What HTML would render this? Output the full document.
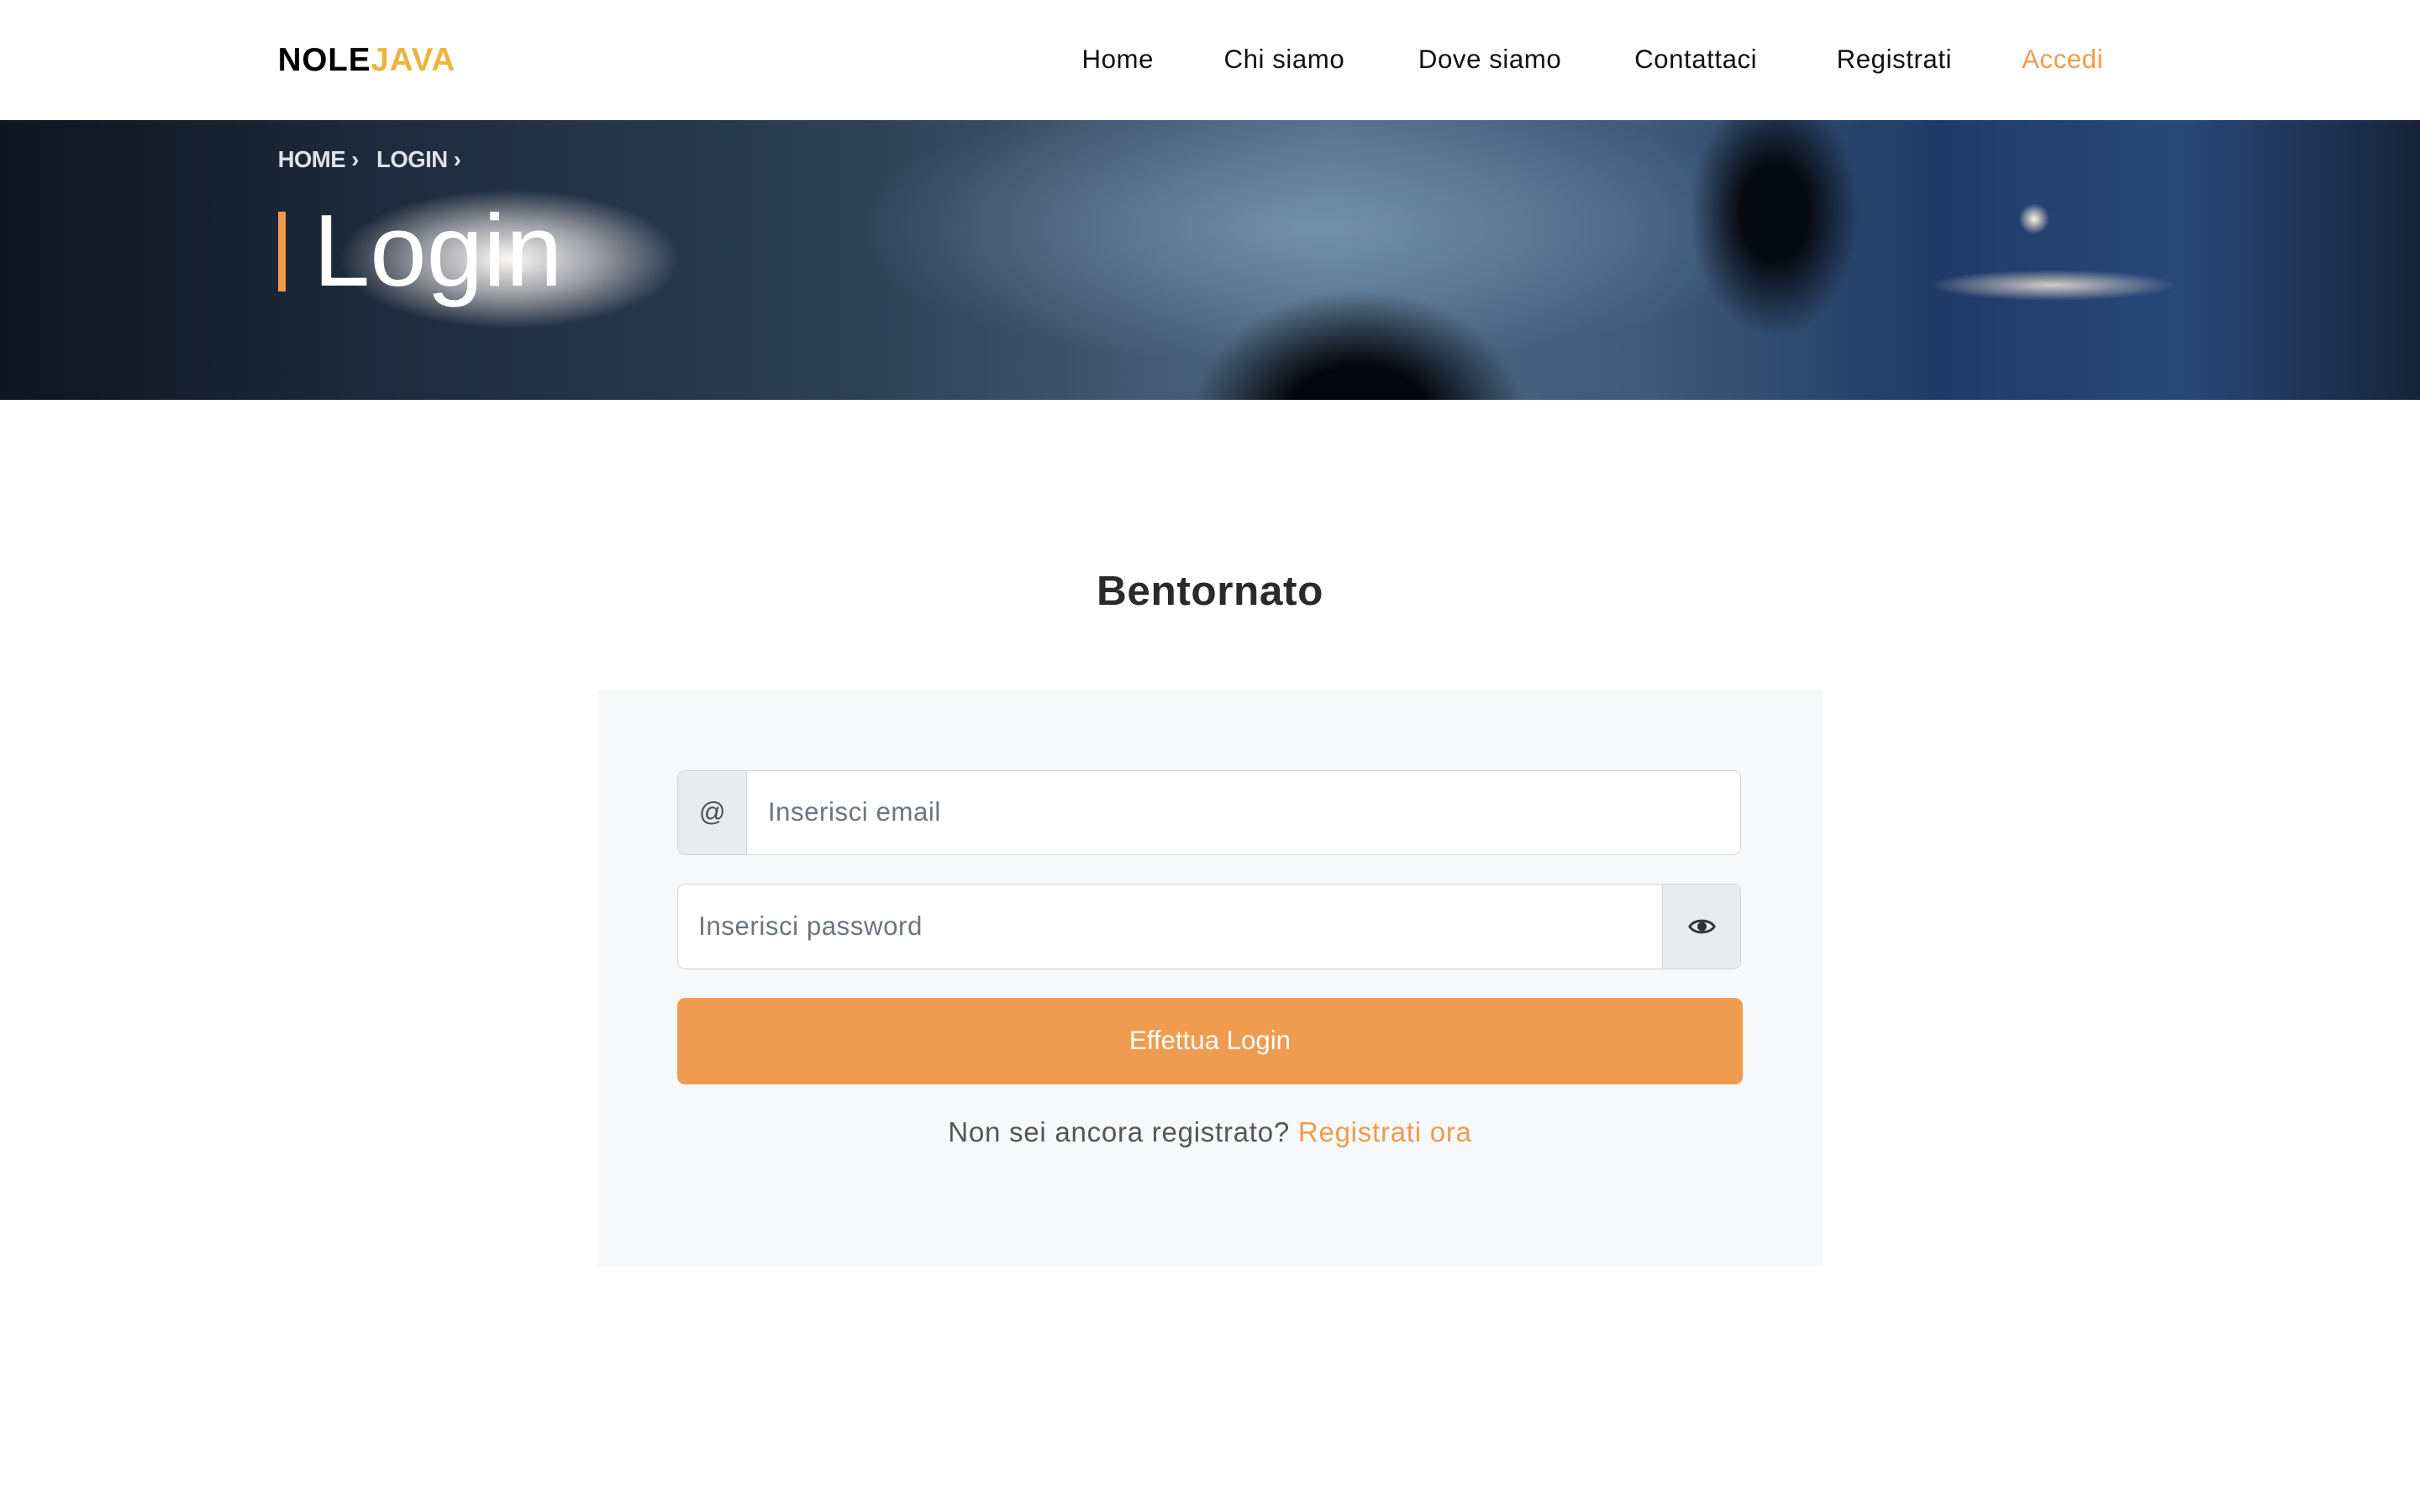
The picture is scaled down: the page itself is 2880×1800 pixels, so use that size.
<!DOCTYPE html>
<html><head><meta charset="utf-8"><style>
html{zoom:1.8367}
body{margin:0;width:1568px;height:980px;overflow:hidden;background:#fff;font-family:"Liberation Sans",sans-serif;color:#212529}
.hdr{height:78px;position:relative}
.logo{position:absolute;left:180px;top:27px;font-weight:bold;font-size:21px;letter-spacing:0.5px;color:#000}
.logo span{color:#ebb53f}
.nav a{position:absolute;top:29px;font-size:17px;color:#111;text-decoration:none;letter-spacing:.3px}
.hero{position:absolute;top:78px;left:0;width:1568px;height:181px;overflow:hidden;
background:
radial-gradient(ellipse 110px 45px at 330px 90px,rgba(255,252,248,.98),rgba(225,220,220,.65) 50%,rgba(0,0,0,0) 100%),
radial-gradient(ellipse 110px 90px at 880px 200px,#04060b 45%,rgba(0,0,0,0) 100%),
radial-gradient(ellipse 55px 80px at 1150px 60px,#060a12 40%,rgba(0,0,0,0) 100%),
radial-gradient(circle 10px at 1318px 64px,#fff5e0,rgba(255,255,255,0)),
radial-gradient(ellipse 80px 10px at 1330px 107px,rgba(255,240,220,.8),rgba(255,255,255,0)),
radial-gradient(ellipse 300px 90px at 850px 70px,rgba(140,170,195,.6),rgba(0,0,0,0)),
linear-gradient(90deg,#0d1520 0%,#1d2a3a 15%,#2c3f55 35%,#4f6a85 55%,#3f5a78 68%,#1f3a66 80%,#29487a 90%,#16243a 100%)}
.bc{position:absolute;left:180px;top:95px;font-size:15px;color:#dde2ea;font-weight:bold;letter-spacing:-.3px}
.title{position:absolute;left:203px;top:126px;font-size:66px;color:#fff;line-height:74px}
.bar{position:absolute;left:180px;top:137px;width:5px;height:52px;background:#ef9b4f}
h2{position:absolute;top:367px;width:1568px;text-align:center;margin:0;font-size:27px;font-weight:bold;color:#2a2a2a;letter-spacing:.3px}
.card{position:absolute;left:387px;top:447px;width:794px;height:374px;background:#f7f8fa}
.in{position:absolute;left:439px;width:688px;height:54px;border:1px solid #ced4da;border-radius:5px;background:#fff;overflow:hidden}
.addon{position:absolute;top:0;height:54px;width:44px;background:#e9ecef;color:#495057;display:flex;align-items:center;justify-content:center;font-size:17px}
.ph{position:absolute;top:17px;font-size:17px;color:#6c757d;letter-spacing:.3px}
.btn{position:absolute;left:439px;top:647px;width:690px;height:56px;background:#ef9c50;border-radius:5px;color:#fff;font-size:17px;text-align:center;line-height:56px}
.reg{position:absolute;top:724px;width:1568px;text-align:center;font-size:18px;color:#555;letter-spacing:.4px}
.reg span{color:#ef9b4f}
</style></head><body>
<div class="hdr">
<div class="logo">NOLE<span>JAVA</span></div>
<div class="nav">
<a style="left:701px">Home</a><a style="left:793px">Chi siamo</a><a style="left:919px">Dove siamo</a><a style="left:1059px">Contattaci</a><a style="left:1190px">Registrati</a><a style="left:1310px;color:#ef9b4f">Accedi</a>
</div></div>
<div class="hero"></div>
<div class="bc">HOME ›&nbsp;&nbsp;&nbsp;LOGIN ›</div>
<div class="bar"></div>
<div class="title">Login</div>
<h2>Bentornato</h2>
<div class="card"></div>
<div class="in" style="top:499px"><div class="addon" style="left:0;border-right:1px solid #ced4da">@</div><div class="ph" style="left:58px">Inserisci email</div></div>
<div class="in" style="top:573px"><div class="ph" style="left:13px">Inserisci password</div><div class="addon" style="right:0;width:50px;border-left:1px solid #ced4da"><svg width="18" height="12" viewBox="0 0 18 12"><path d="M1 6C4 1 14 1 17 6C14 11 4 11 1 6Z" fill="none" stroke="#333" stroke-width="1.6"/><circle cx="9" cy="6" r="3" fill="#333"/></svg></div></div>
<div class="btn">Effettua Login</div>
<div class="reg">Non sei ancora registrato? <span>Registrati ora</span></div>
</body></html>
